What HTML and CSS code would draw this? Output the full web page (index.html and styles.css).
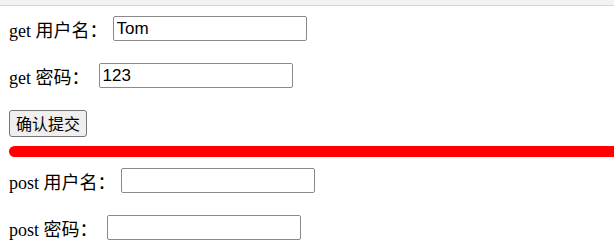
FILE: index.html
```html
<!DOCTYPE html>
<html lang="zh-CN">
<head>
<meta charset="utf-8">
<title>form</title>
<link rel="stylesheet" href="styles.css">
</head>
<body>
<div class="topbar"></div>
<div class="page">
  <form class="form">
    <label class="row">get 用户名：<input class="field" type="text" value="Tom"></label>
    <label class="row">get 密码：<input class="field field-short" type="text" value="123"></label>
    <div class="row row-button"><button class="submit" type="button">确认提交</button></div>
  </form>
  <div class="divider"></div>
  <form class="form">
    <label class="row">post 用户名：<input class="field" type="text" value=""></label>
    <label class="row">post 密码：<input class="field field-short" type="text" value=""></label>
  </form>
</div>
</body>
</html>
```

FILE: styles.css
```css
html, body {
  margin: 0;
  padding: 0;
  background: #ffffff;
  overflow: hidden;
}

.topbar {
  height: 5px;
  background: #f2f2f2;
  border-bottom: 1px solid #d6d6d6;
}

.page {
  padding: 10px 0 0 9px;
  font-family: "Liberation Serif", "Noto Sans CJK SC", serif;
  font-size: 18px;
  color: #000;
}

.form {
  display: flex;
  flex-direction: column;
  gap: 22px;
  margin: 0;
}

.row {
  display: flex;
  align-items: center;
  height: 25px;
  white-space: pre;
}

.row-button {
  height: 27px;
}

.field {
  box-sizing: border-box;
  width: 194px;
  height: 25px;
  margin: 0 0 0 5px;
  padding: 1px 3px;
  border: 1px solid #8a8a8a;
  border-radius: 2px;
  font-family: "Liberation Sans", Arial, sans-serif;
  font-size: 17px;
  color: #000;
  background: #fff;
}

.field-short {
  margin-left: 9px;
}

.submit {
  box-sizing: border-box;
  height: 27px;
  padding: 0 6px;
  border: 1px solid #767676;
  border-radius: 3px;
  background: #efefef;
  font-family: "Noto Sans CJK SC", sans-serif;
  font-size: 16px;
  line-height: 23px;
  color: #000;
}

.divider {
  height: 11px;
  margin: 9px 0 11px 0;
  background: #ff0000;
  border-radius: 6px 0 0 6px;
}
```
